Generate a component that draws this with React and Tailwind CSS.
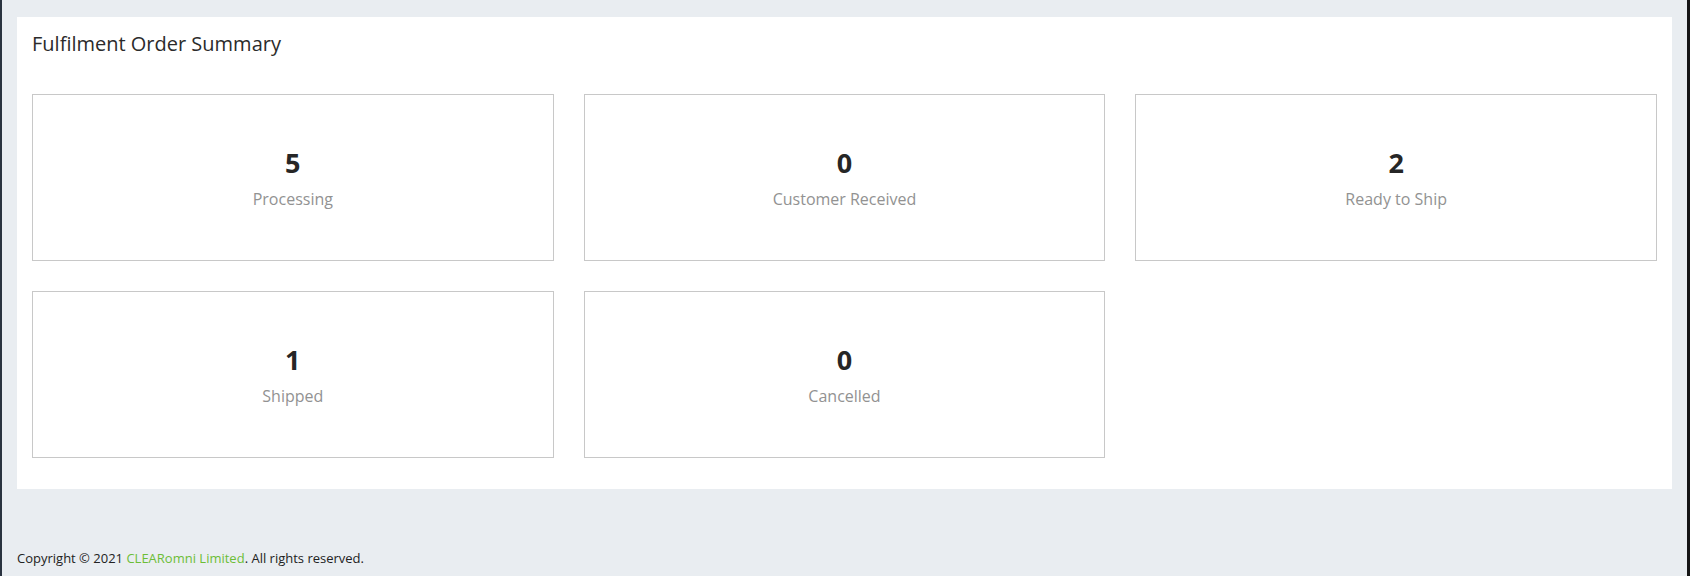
const stats = [
  { value: 5, label: 'Processing' },
  { value: 0, label: 'Customer Received' },
  { value: 2, label: 'Ready to Ship' },
  { value: 1, label: 'Shipped' },
  { value: 0, label: 'Cancelled' },
]

function StatCard({ value, label }) {
  return (
    <div className="h-[167px] border border-[#c8c8c8] flex flex-col items-center justify-center">
      <div className="text-[27px] leading-[36px] font-bold text-[#262626]">{value}</div>
      <div className="text-[16px] leading-[22px] text-[#929292] mt-[7px]">{label}</div>
    </div>
  )
}

export default function App() {
  return (
    <div
      className="w-[1690px] h-[576px] bg-[#e9edf1] flex border-l-2 border-l-[#2a3340] border-r-[3px] border-r-[#151515]"
      style={{ fontFamily: '"Open Sans", "Noto Sans", sans-serif' }}
    >
      <div className="flex-1 flex flex-col pt-[17px] pl-[15px] pr-[15px]">
        {/* Summary panel */}
        <div className="bg-white px-[15px] pt-[14px] pb-[31px]">
          <h2 className="text-[20px] leading-[26px] text-[#2b2b2b] font-normal">
            Fulfilment Order Summary
          </h2>
          <div className="grid grid-cols-3 gap-[30px] mt-[37px]">
            {stats.map((s) => (
              <StatCard key={s.label} value={s.value} label={s.label} />
            ))}
          </div>
        </div>

        {/* Footer */}
        <div className="mt-auto pb-[9px] text-[13px] leading-[18px] text-[#222]">
          Copyright © 2021 <span className="text-[#6cbd37]">CLEARomni Limited</span>. All rights reserved.
        </div>
      </div>
    </div>
  )
}
